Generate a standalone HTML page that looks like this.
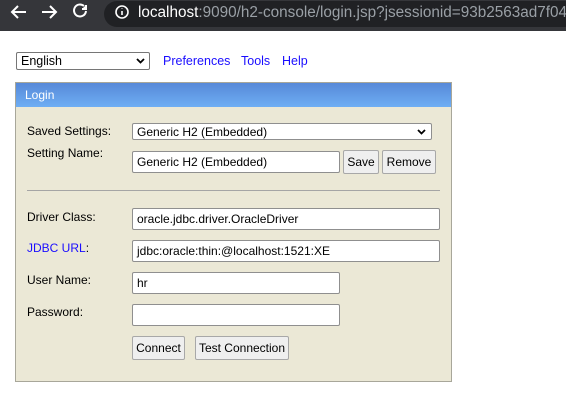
<!DOCTYPE html>
<html><head><meta charset="utf-8"><style>
*{box-sizing:border-box;margin:0;padding:0}
body{width:566px;height:414px;background:#fff;font-family:"Liberation Sans",Arial,sans-serif;font-size:12px;color:#000;position:relative;overflow:hidden}
.a{position:absolute}
.bar{left:0;top:0;width:566px;height:31px;background:#35363a}
.pill{left:104px;top:1px;width:480px;height:26px;background:#202124;border-radius:13px}
.url{left:138px;top:4px;font-size:15.3px;color:#9aa0a6;white-space:nowrap}
.url b{color:#fff;font-weight:normal}
.inp{background:#fff;border:1px solid #8f8f8f;border-radius:2px;font-size:12px;padding:3px 0 0 4px;white-space:nowrap}
.btn{background:#efefef;border:1px solid #a8a8a8;border-radius:2px;font-size:12px;text-align:center;padding-top:4px}
.lbl{font-size:12px}
a{color:#1a0dff;text-decoration:none}
</style></head><body>
<div class="a bar"></div>
<div class="a pill"></div>
<svg class="a" style="left:0;top:0" width="140" height="31" fill="none" stroke="#fff" stroke-width="2">
<path d="M26 12H12M18 6l-6 6 6 6"/>
<path d="M42 12h14M50 6l6 6-6 6"/>
<path d="M86 11a6 6 0 1 1-2-5" /><path d="M86 5v4h-4" fill="#fff"/>
<circle cx="122" cy="12" r="6" stroke-width="1.6"/><path d="M122 11v4M122 8.5v.5" stroke-width="1.6"/>
</svg>
<div class="a url"><b>localhost</b>:9090/h2-console/login.jsp?jsessionid=93b2563ad7f04</div>

<div class="a inp" style="left:16px;top:52px;width:134px;height:18px;padding-top:1px;border-color:#767676;font-size:12.5px">English
<svg style="position:absolute;right:4px;top:5px" width="9" height="6"><path d="M1 1l3.5 3.5L8 1" stroke="#000" stroke-width="1.8" fill="none"/></svg></div>
<a class="a" style="left:163px;top:54px;font-size:12.5px">Preferences</a>
<a class="a" style="left:241px;top:54px;font-size:12.5px">Tools</a>
<a class="a" style="left:282px;top:54px;font-size:12.5px">Help</a>

<div class="a" style="left:15px;top:82px;width:437px;height:300px;background:#ebe8d6;border:1px solid #a8a79a"></div>
<div class="a" style="left:16px;top:83px;width:435px;height:24px;background:linear-gradient(#5789d8,#6eaef4)"></div>
<div class="a" style="left:25px;top:88px;color:#fff;font-size:12px">Login</div>

<div class="a lbl" style="left:27px;top:124px">Saved Settings:</div>
<div class="a inp" style="left:132px;top:123px;width:300px;height:17px;padding-top:1px">Generic H2 (Embedded)
<svg style="position:absolute;right:5px;top:5px" width="9" height="6"><path d="M1 1l3.5 3.5L8 1" stroke="#000" stroke-width="1.8" fill="none"/></svg></div>
<div class="a lbl" style="left:27px;top:146px">Setting Name:</div>
<div class="a inp" style="left:132px;top:151px;width:208px;height:22px">Generic H2 (Embedded)</div>
<div class="a btn" style="left:343px;top:150px;width:36px;height:24px">Save</div>
<div class="a btn" style="left:382px;top:150px;width:54px;height:24px">Remove</div>
<div class="a" style="left:27px;top:190px;width:413px;height:1px;background:#a5a5a5"></div>

<div class="a lbl" style="left:27px;top:210px">Driver Class:</div>
<div class="a inp" style="left:132px;top:208px;width:308px;height:22px">oracle.jdbc.driver.OracleDriver</div>
<div class="a lbl" style="left:27px;top:241px"><a>JDBC URL</a>:</div>
<div class="a inp" style="left:132px;top:240px;width:308px;height:22px">jdbc:oracle:thin:@localhost:1521:XE</div>
<div class="a lbl" style="left:27px;top:273px">User Name:</div>
<div class="a inp" style="left:132px;top:272px;width:208px;height:22px">hr</div>
<div class="a lbl" style="left:27px;top:305px">Password:</div>
<div class="a inp" style="left:132px;top:304px;width:208px;height:22px"></div>
<div class="a btn" style="left:132px;top:336px;width:53px;height:24px">Connect</div>
<div class="a btn" style="left:195px;top:336px;width:94px;height:24px">Test Connection</div>
</body></html>
